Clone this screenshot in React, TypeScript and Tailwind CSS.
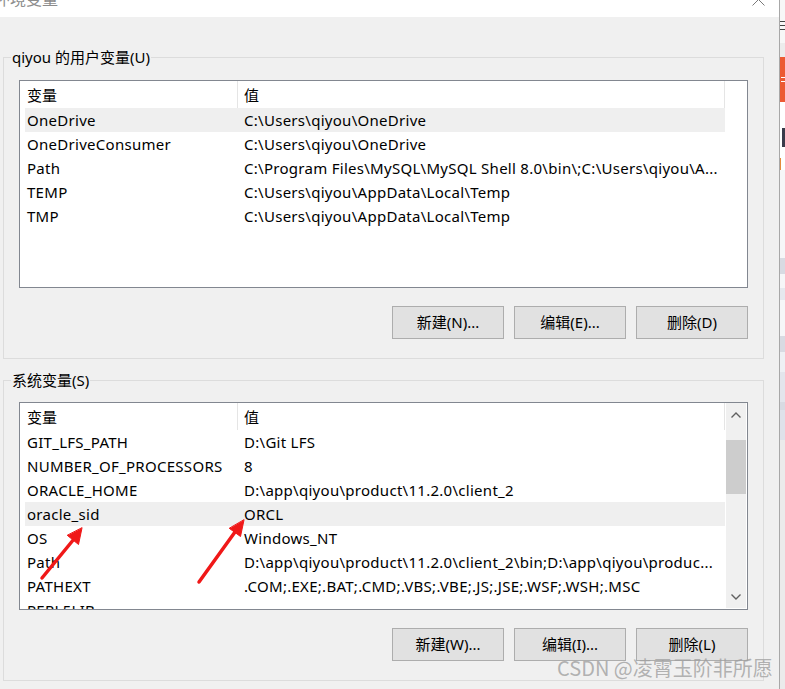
import React from "react";

type Row = { name: string; value: string; sel?: boolean };

const userRows: Row[] = [
  { name: "OneDrive", value: "C:\\Users\\qiyou\\OneDrive", sel: true },
  { name: "OneDriveConsumer", value: "C:\\Users\\qiyou\\OneDrive" },
  { name: "Path", value: "C:\\Program Files\\MySQL\\MySQL Shell 8.0\\bin\\;C:\\Users\\qiyou\\A..." },
  { name: "TEMP", value: "C:\\Users\\qiyou\\AppData\\Local\\Temp" },
  { name: "TMP", value: "C:\\Users\\qiyou\\AppData\\Local\\Temp" },
];

const sysRows: Row[] = [
  { name: "GIT_LFS_PATH", value: "D:\\Git LFS" },
  { name: "NUMBER_OF_PROCESSORS", value: "8" },
  { name: "ORACLE_HOME", value: "D:\\app\\qiyou\\product\\11.2.0\\client_2" },
  { name: "oracle_sid", value: "ORCL", sel: true },
  { name: "OS", value: "Windows_NT" },
  { name: "Path", value: "D:\\app\\qiyou\\product\\11.2.0\\client_2\\bin;D:\\app\\qiyou\\produc..." },
  { name: "PATHEXT", value: ".COM;.EXE;.BAT;.CMD;.VBS;.VBE;.JS;.JSE;.WSF;.WSH;.MSC" },
  { name: "PERL5LIB", value: "" },
];

function Chevron({ up }: { up?: boolean }) {
  return (
    <svg width="10" height="6" viewBox="0 0 10 6">
      <polyline
        points={up ? "0.5,5.5 5,1 9.5,5.5" : "0.5,0.5 5,5 9.5,0.5"}
        fill="none"
        stroke="#606060"
        strokeWidth="1.4"
      />
    </svg>
  );
}

function ListView({ rows, scroll }: { rows: Row[]; scroll?: boolean }) {
  return (
    <div className="h-[208px] border border-[#828790] bg-white flex overflow-hidden">
      <div className="flex-1 pl-[5px] flex flex-col overflow-hidden">
        <div className="flex h-[27px] shrink-0 w-[700px]">
          <div className="w-[213px] border-r border-[#e5e5e5] pl-[2px] flex items-center pt-[2px]">变量</div>
          <div className="w-[487px] border-r border-[#e5e5e5] pl-[6px] flex items-center pt-[2px]">值</div>
        </div>
        {rows.map((r, i) => (
          <div
            key={i}
            className={`flex h-[24px] shrink-0 w-[700px] items-center whitespace-nowrap tracking-[0.28px] ${r.sel ? "bg-[#efefef]" : ""}`}
          >
            <div className="w-[213px] pl-[2px] overflow-hidden">{r.name}</div>
            <div className="w-[487px] pl-[6px] overflow-hidden">{r.value}</div>
          </div>
        ))}
      </div>
      {scroll && (
        <div className="w-[20px] mr-[1px] mb-[1px] bg-[#f0f0f0] flex flex-col">
          <div className="h-[24px] flex items-center justify-center">
            <Chevron up />
          </div>
          <div className="mt-[13px] h-[54px] bg-[#cdcdcd]" />
          <div className="flex-1" />
          <div className="h-[22px] flex items-center justify-center">
            <Chevron />
          </div>
        </div>
      )}
    </div>
  );
}

function Btn({ children }: { children: React.ReactNode }) {
  return (
    <div className="w-[112px] h-[33px] border border-[#adadad] bg-[#e1e1e1] flex items-center justify-center">
      {children}
    </div>
  );
}

function Group({
  label,
  rows,
  scroll,
  buttons,
  className,
}: {
  label: string;
  rows: Row[];
  scroll?: boolean;
  buttons: string[];
  className: string;
}) {
  return (
    <div className={`relative ml-[3px] w-[761px] border border-[#dcdcdc] px-[15px] pb-[19px] ${className}`}>
      <div className="absolute top-[-11px] left-[7px] px-[1px] bg-[#f0f0f0] leading-[20px]">{label}</div>
      <ListView rows={rows} scroll={scroll} />
      <div className="mt-[18px] flex justify-end gap-[10px]">
        {buttons.map((b) => (
          <Btn key={b}>{b}</Btn>
        ))}
      </div>
    </div>
  );
}

function Strip() {
  return (
    <div className="flex-1 flex flex-col bg-[#f2f3f5]">
      <div className="h-[21px] bg-[#f7f7f7]" />
      <div className="h-px bg-[#444]" />
      <div className="h-[3px] bg-[#f7f7f7]" />
      <div className="h-px bg-[#444]" />
      <div className="h-[3px] bg-[#f7f7f7]" />
      <div className="h-px bg-[#444]" />
      <div className="h-[13px] bg-[#f7f7f7]" />
      <div className="h-[14px] bg-[#ececec]" />
      <div className="h-[45px] bg-[#ec5a33] flex flex-col justify-center gap-[3px]">
        <div className="h-px bg-white ml-[1px]" />
        <div className="h-px bg-white ml-[1px]" />
      </div>
      <div className="h-[26px] bg-white" />
      <div className="h-[19px] bg-white flex">
        <div className="w-[2px]" />
        <div className="flex-1 bg-[#3a3b4a]" />
      </div>
      <div className="h-[11px] bg-white" />
      <div className="h-[12px] bg-white flex">
        <div className="w-[1px] bg-[#e58a3a]" />
      </div>
      <div className="h-[88px] bg-[#f6f6f8]" />
      <div className="h-[16px] bg-[#d8dae2]" />
      <div className="h-[14px] bg-[#f6f6f8]" />
      <div className="h-[12px] bg-[#e6e8ee]" />
      <div className="h-[36px] bg-[#f6f6f8]" />
      <div className="h-[16px] bg-[#d8dae2]" />
      <div className="h-[20px] bg-[#eef0f4]" />
      <div className="h-[30px] bg-[#e3e5ec]" />
      <div className="h-[8px] bg-[#d8dae2]" />
      <div className="h-[30px] bg-[#dfe2ea]" />
      <div className="flex-1 bg-[#ebebeb]" />
    </div>
  );
}

function Arrows() {
  return (
    <svg className="absolute left-0 top-0 pointer-events-none" width="785" height="689" viewBox="0 0 785 689">
      <g stroke="#f01818" strokeWidth="3.5" strokeLinecap="round" fill="#f01818">
        <line x1="42" y1="578" x2="74" y2="539" />
        <polygon points="82,528 78.5,544.5 67.5,535.5" strokeWidth="1" />
        <line x1="199" y1="582" x2="235" y2="532" />
        <polygon points="244,520 240.5,536.5 229.5,528.5" strokeWidth="1" />
      </g>
    </svg>
  );
}

export default function App() {
  return (
    <div className="relative w-[785px] h-[689px] overflow-hidden flex bg-[#f0f0f0] font-['Noto_Sans','Noto_Sans_CJK_SC',sans-serif] text-[15px] text-black">
      <div className="w-[779px] shrink-0 flex flex-col">
        <div className="relative h-[17px] bg-white overflow-hidden">
          <div className="absolute top-[-13px] left-[-6px] text-[16px] text-[#8c8c8c] whitespace-nowrap">环境变量</div>
          <svg className="absolute left-[752px] top-[-7px]" width="13" height="13" viewBox="0 0 13 13">
            <path d="M0.5 0.5 L12.5 12.5 M12.5 0.5 L0.5 12.5" stroke="#7a7a7a" strokeWidth="1" fill="none" />
          </svg>
        </div>
        <Group
          label="qiyou 的用户变量(U)"
          rows={userRows}
          buttons={["新建(N)...", "编辑(E)...", "删除(D)"]}
          className="mt-[40px] pt-[22px]"
        />
        <Group
          label="系统变量(S)"
          rows={sysRows}
          scroll
          buttons={["新建(W)...", "编辑(I)...", "删除(L)"]}
          className="mt-[21px] pt-[21px]"
        />
      </div>
      <div className="w-px shrink-0 bg-[#a8a8a8]" />
      <Strip />
      <Arrows />
      <div className="absolute left-[557px] top-[655px] text-[20px] leading-[26px] text-[#a0a0a0]/80 whitespace-nowrap font-['Noto_Sans_CJK_SC',sans-serif]">
        CSDN @凌霄玉阶非所愿
      </div>
    </div>
  );
}
